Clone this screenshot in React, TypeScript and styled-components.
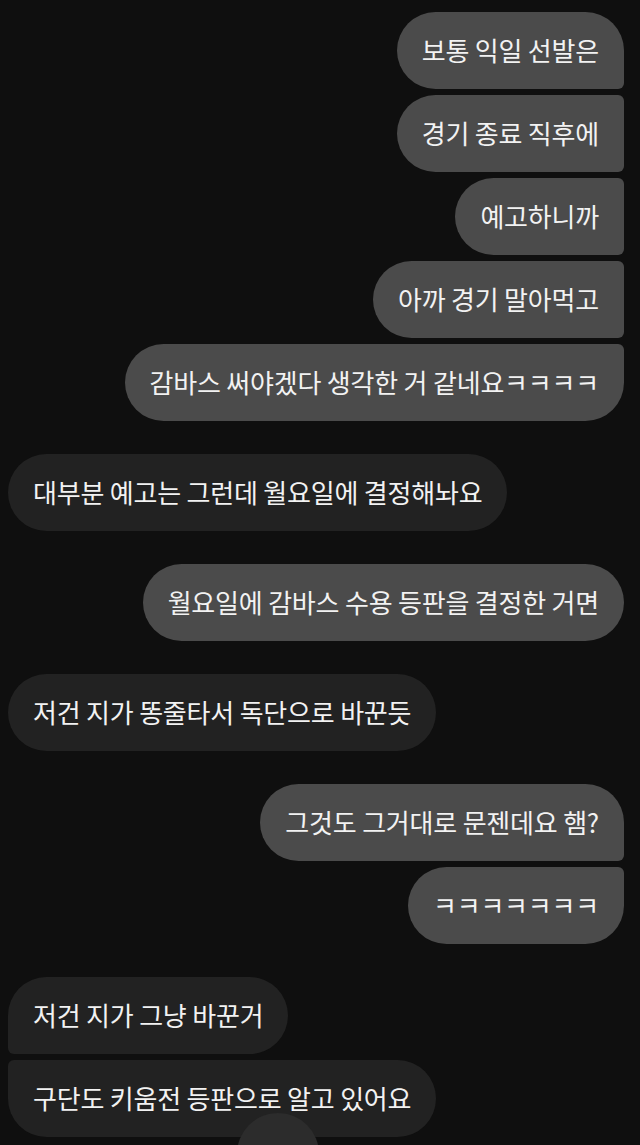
import React from 'react';
import styled, { createGlobalStyle } from 'styled-components';

const GlobalStyle = createGlobalStyle`
  html, body {
    margin: 0;
    padding: 0;
    background: #0f0f0f;
  }
  body {
    font-family: "Noto Sans CJK KR", "Noto Sans", sans-serif;
  }
`;

const Screen = styled.div`
  position: relative;
  width: 640px;
  height: 1145px;
  overflow: hidden;
  background: #0f0f0f;
  padding: 12px 16px 0 8px;
  box-sizing: border-box;
  display: flex;
  flex-direction: column;
  gap: 33px;
`;

const Group = styled.div<{ mine?: boolean }>`
  display: flex;
  flex-direction: column;
  align-items: ${(p) => (p.mine ? 'flex-end' : 'flex-start')};
  gap: 6px;
`;

const BIG = 39;
const SMALL = 6;

const Bubble = styled.div<{ mine?: boolean; first?: boolean; last?: boolean }>`
  height: 77px;
  box-sizing: border-box;
  display: flex;
  align-items: center;
  padding: 0 25px 2px 25px;
  font-size: 26px;
  letter-spacing: -0.2px;
  color: #f2f2f2;
  white-space: nowrap;
  background: ${(p) => (p.mine ? '#4b4b4b' : '#222222')};
  border-radius: ${(p) =>
    p.mine
      ? `${BIG}px ${p.first ? BIG : SMALL}px ${p.last ? BIG : SMALL}px ${BIG}px`
      : `${p.first ? BIG : SMALL}px ${BIG}px ${BIG}px ${p.last ? BIG : SMALL}px`};
`;

const ScrollDot = styled.div`
  position: absolute;
  left: 237px;
  top: 1113px;
  width: 82px;
  height: 82px;
  border-radius: 50%;
  background: #2c2c2c;
`;

const groups: { mine: boolean; lines: string[] }[] = [
  {
    mine: true,
    lines: [
      '보통 익일 선발은',
      '경기 종료 직후에',
      '예고하니까',
      '아까 경기 말아먹고',
      '감바스 써야겠다 생각한 거 같네요ㅋㅋㅋㅋ',
    ],
  },
  { mine: false, lines: ['대부분 예고는 그런데 월요일에 결정해놔요'] },
  { mine: true, lines: ['월요일에 감바스 수용 등판을 결정한 거면'] },
  { mine: false, lines: ['저건 지가 똥줄타서 독단으로 바꾼듯'] },
  { mine: true, lines: ['그것도 그거대로 문젠데요 햄?', 'ㅋㅋㅋㅋㅋㅋㅋ'] },
  { mine: false, lines: ['저건 지가 그냥 바꾼거', '구단도 키움전 등판으로 알고 있어요'] },
];

const App = () => {
  return (
    <>
      <GlobalStyle />
      <Screen>
        {groups.map((g, gi) => (
          <Group key={gi} mine={g.mine}>
            {g.lines.map((line, i) => (
              <Bubble
                key={i}
                mine={g.mine}
                first={i === 0}
                last={i === g.lines.length - 1}
              >
                {line}
              </Bubble>
            ))}
          </Group>
        ))}
        <ScrollDot />
      </Screen>
    </>
  );
};

export default App;
